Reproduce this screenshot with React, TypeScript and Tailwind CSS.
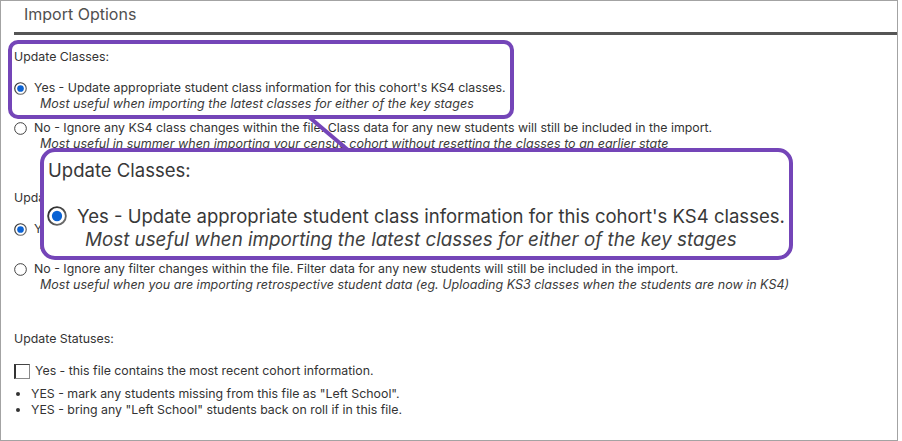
import React from "react";

const PURPLE = "#7445b8";

function Radio({ checked, size = 13 }: { checked?: boolean; size?: number }) {
  return (
    <svg width={size} height={size} viewBox="0 0 14 14" className="shrink-0">
      <defs>
        <linearGradient id="rg" x1="0" y1="0" x2="1" y2="1">
          <stop offset="0" stopColor="#222" />
          <stop offset="1" stopColor="#777" />
        </linearGradient>
      </defs>
      {checked ? (
        <>
          <circle cx="7" cy="7" r="6.2" fill="#fff" stroke="url(#rg)" strokeWidth="1.3" />
          <circle cx="7" cy="7" r="3.6" fill="#0a62d4" />
        </>
      ) : (
        <circle cx="7" cy="7" r="6.3" fill="#fff" stroke="#333" strokeWidth="1" />
      )}
    </svg>
  );
}

export default function App() {
  return (
    <div className="w-[902px] h-[441px] bg-white relative overflow-hidden" style={{ fontFamily: "Inter, 'Noto Sans', sans-serif" }}>
      <div className="w-[898px] h-[441px] border border-[#a3a3a3] text-[12.35px] leading-[16px] text-[#333] whitespace-nowrap">
        <div className="pt-[3px] pl-[23px] text-[16px] leading-[20px] text-[#505050]">Import Options</div>
        <div className="mt-[8px] ml-[13px] h-[3px] bg-[#555]" />

        <div className="pl-[13px]">
          <div className="mt-[14px]">Update Classes:</div>
          <div className="mt-[15px] flex items-center gap-[7px]">
            <Radio checked />
            <span>Yes - Update appropriate student class information for this cohort's KS4 classes.</span>
          </div>
          <div className="pl-[26px] italic text-[12.5px] text-[#3a3a3a]">Most useful when importing the latest classes for either of the key stages</div>
          <div className="mt-[8px] flex items-center gap-[7px]">
            <Radio />
            <span>No - Ignore any KS4 class changes within the file. Class data for any new students will still be included in the import.</span>
          </div>
          <div className="pl-[26px] italic text-[12.5px] text-[#3a3a3a]">Most useful in summer when importing your census cohort without resetting the classes to an earlier state</div>

          <div className="mt-[38px]">Update Filters:</div>
          <div className="mt-[15px] flex items-center gap-[7px]">
            <Radio checked />
            <span>Yes - Update appropriate student filter information for this cohort's KS4 students.</span>
          </div>
          <div className="pl-[26px] italic text-[12.5px] text-[#3a3a3a]">Most useful when importing the latest filters for either of the key stages</div>
          <div className="mt-[8px] flex items-center gap-[7px]">
            <Radio />
            <span>No - Ignore any filter changes within the file. Filter data for any new students will still be included in the import.</span>
          </div>
          <div className="pl-[26px] italic text-[12.5px] text-[#3a3a3a]">Most useful when you are importing retrospective student data (eg. Uploading KS3 classes when the students are now in KS4)</div>

          <div className="mt-[38px]">Update Statuses:</div>
          <div className="mt-[16px] flex items-center gap-[5px]">
            <span className="w-[16px] h-[15px] border border-l-2 border-t-[#444] border-l-[#333] border-r-[#8a8a8a] border-b-[#8a8a8a] bg-white shrink-0" />
            <span>Yes - this file contains the most recent cohort information.</span>
          </div>
          <ul className="mt-[7px]">
            <li className="flex items-center">
              <span className="ml-[2px] w-[4px] h-[4px] rounded-full bg-[#333]" />
              <span className="ml-[11px]">YES - mark any students missing from this file as "Left School".</span>
            </li>
            <li className="flex items-center">
              <span className="ml-[2px] w-[4px] h-[4px] rounded-full bg-[#333]" />
              <span className="ml-[11px]">YES - bring any "Left School" students back on roll if in this file.</span>
            </li>
          </ul>
        </div>
      </div>

      {/* highlight ring */}
      <div className="absolute left-[8px] top-[40px] w-[506px] h-[79px] rounded-[10px] border-[4px] border-[#7445b8]" />

      {/* connector */}
      <svg className="absolute left-0 top-0" width="902" height="441" viewBox="0 0 902 441">
        <line x1="309" y1="117" x2="348" y2="150" stroke={PURPLE} strokeWidth="4" />
      </svg>

      {/* magnified callout */}
      <div className="absolute left-[40px] top-[148px] w-[753px] h-[112px] rounded-[15px] border-[4px] border-[#7445b8] bg-white text-[18.55px] leading-[24px] text-[#383838] whitespace-nowrap">
        <div className="pl-[4px] mt-[6px]">Update Classes:</div>
        <div className="mt-[22px] pl-[3px] flex items-center gap-[10px]">
          <Radio checked size={20} />
          <span>Yes - Update appropriate student class information for this cohort's KS4 classes.</span>
        </div>
        <div className="pl-[41px] italic text-[18.8px] text-[#404040]">Most useful when importing the latest classes for either of the key stages</div>
      </div>
    </div>
  );
}
